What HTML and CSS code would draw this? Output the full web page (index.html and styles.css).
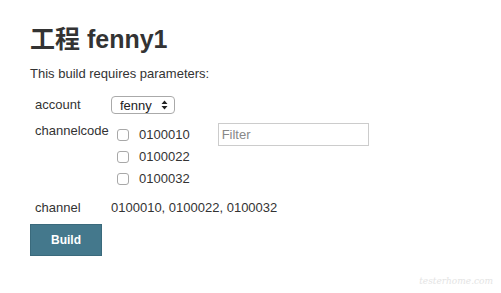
FILE: index.html
```html
<!DOCTYPE html>
<html lang="zh-CN">
<head>
  <meta charset="UTF-8" />
  <title>工程 fenny1</title>
  <meta name="viewport" content="width=device-width, initial-scale=1.0" />
  <link rel="stylesheet" href="styles.css">
</head>
<body>
  <div class="page">
    <h1>工程 fenny1</h1>
    <p class="intro">This build requires parameters:</p>

    <div class="params">
      <div class="row">
        <div class="label">account</div>
        <div class="value">
          <span class="select-wrap">
            <select class="select">
              <option>fenny</option>
            </select>
            <svg class="select-arrows" width="7" height="10" viewBox="0 0 7 10">
              <path d="M3.5 0.5 L6.5 4 L0.5 4 Z M3.5 9.5 L6.5 6 L0.5 6 Z" fill="#222" />
            </svg>
          </span>
        </div>
      </div>

      <div class="row">
        <div class="label">channelcode</div>
        <div class="value split">
          <div class="checks">
            <label class="check"><input type="checkbox" /> 0100010</label>
            <label class="check"><input type="checkbox" /> 0100022</label>
            <label class="check"><input type="checkbox" /> 0100032</label>
          </div>
          <input class="filter" type="text" placeholder="Filter" />
        </div>
      </div>

      <div class="row channel">
        <div class="label">channel</div>
        <div class="value">0100010, 0100022, 0100032</div>
      </div>
    </div>

    <button class="btn-build">Build</button>
  </div>

  <div class="watermark">testerhome.com</div>
</body>
</html>
```

FILE: styles.css
```css
body {
  margin: 0;
  font-family: 'Liberation Sans', Arial, 'Noto Sans CJK SC', sans-serif;
  color: #333;
  background: #fff;
}
.page {
  padding: 20px 30px;
}
h1 {
  font-size: 25px;
  font-weight: bold;
  margin: 4px 0 0;
  line-height: 30px;
}
.intro {
  font-size: 13px;
  margin: 12px 0 15px;
}
.params {
  padding-left: 5px;
  font-size: 13px;
}
.row {
  display: flex;
  margin-bottom: 7px;
}
.label {
  width: 76px;
  line-height: 18px;
}
.value {
  line-height: 18px;
}
.split {
  display: flex;
  gap: 28px;
  padding-left: 6px;
}
.select-wrap {
  position: relative;
  display: inline-block;
}
.select {
  appearance: none;
  -webkit-appearance: none;
  font-family: inherit;
  font-size: 13px;
  height: 18px;
  width: 64px;
  padding: 0 0 0 8px;
  border: 1px solid #aaa;
  border-radius: 4px;
  background: #fff;
  color: #222;
}
.select-arrows {
  position: absolute;
  right: 7px;
  top: 4px;
  pointer-events: none;
}
.checks {
  display: flex;
  flex-direction: column;
  gap: 4px;
  padding-top: 4px;
}
.check {
  display: flex;
  align-items: center;
  gap: 10px;
}
.check input {
  appearance: none;
  -webkit-appearance: none;
  margin: 0;
  width: 12px;
  height: 12px;
  border: 1px solid #a8a8a8;
  border-radius: 3px;
  background: #fff;
}
.filter {
  width: 151px;
  height: 23px;
  box-sizing: border-box;
  border: 1px solid #ccc;
  font-family: inherit;
  font-size: 13px;
  padding: 2px 3px;
  margin-top: 1px;
}
.filter::placeholder {
  color: #888;
}
.channel {
  margin-top: 11px;
}
.btn-build {
  margin-top: 0;
  width: 72px;
  height: 32px;
  background: #44788c;
  border: 1px solid #3a6a7c;
  color: #fff;
  font-family: inherit;
  font-weight: bold;
  font-size: 12px;
}
.watermark {
  position: absolute;
  right: 8px;
  bottom: 7px;
  font-family: 'DejaVu Serif', serif;
  font-style: italic;
  font-size: 9px;
  color: #e4e4e4;
}
```
